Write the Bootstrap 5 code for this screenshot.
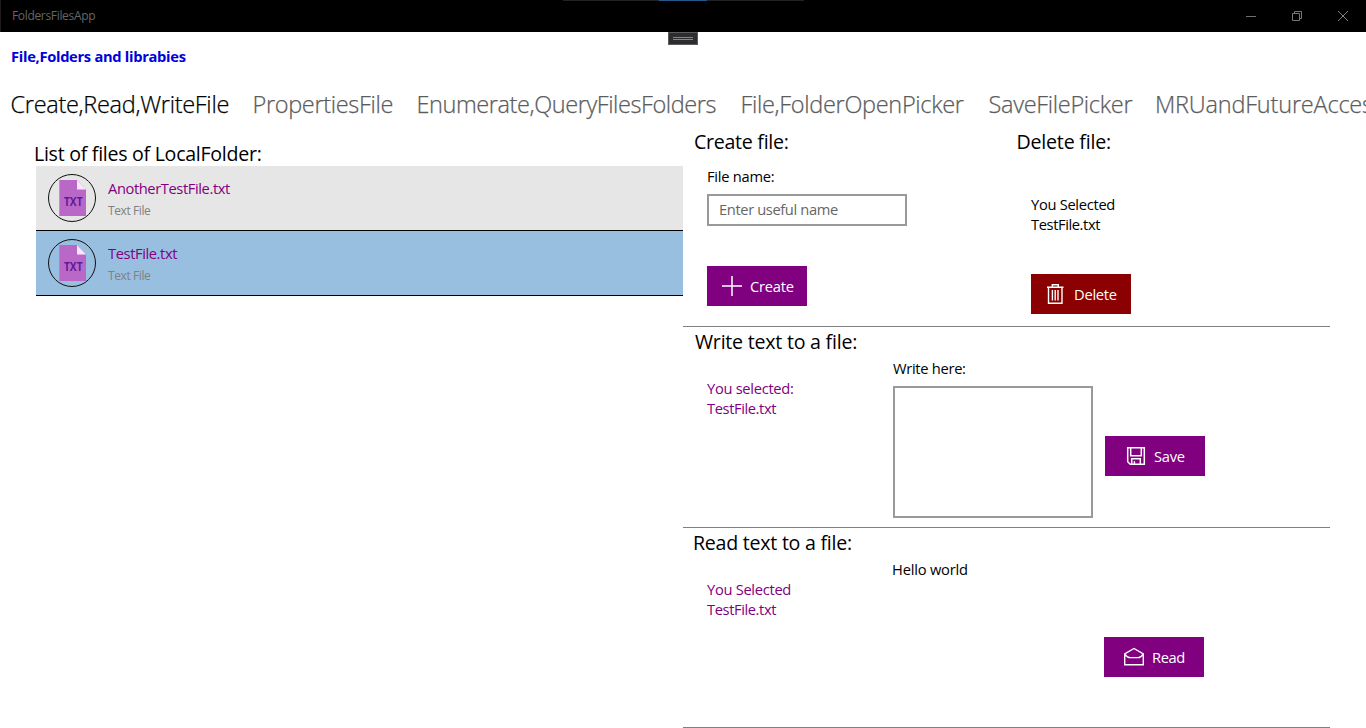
<!DOCTYPE html>
<html lang="en">
<head>
<meta charset="utf-8">
<meta name="viewport" content="width=device-width, initial-scale=1">
<title>FoldersFilesApp</title>
<link href="https://cdn.jsdelivr.net/npm/bootstrap@5.3.0/dist/css/bootstrap.min.css" rel="stylesheet">
<style>
body{font-family:"Open Sans",sans-serif;font-size:14.7px;line-height:20px;letter-spacing:-.3px;color:#000;background:#fff;height:728px;overflow:hidden}
.titlebar{height:32px;background:#000;color:#666;font-size:12px;letter-spacing:-.33px;border-left:1px solid #1c1c1c;padding-left:11px}
.dock-line{top:0;left:563px;width:241px;height:1px;background:linear-gradient(90deg,#222 96px,#24598c 96px,#24598c 144px,#222 144px)}
.handle{left:668px;top:32px;width:30px;height:13px;background:#2d2d30;border:1px solid #5c5c5f;padding:4px 4px 0}
.handle i{display:block;height:3px;border-top:1px solid #85858a;border-bottom:1px solid #85858a}
.win svg{width:10px;height:10px;margin-right:36px;display:block}
.win svg:last-child{margin-right:18px}
.app-title{height:56px;padding:14px 0 0 11px;font-size:14.7px;line-height:20px;font-weight:700;letter-spacing:-.3px;color:#0000dc}
.pivot{height:38px;flex-wrap:nowrap;padding-left:10.5px;overflow:hidden}
.pivot .nav-link{flex:none;padding:0;font-size:23.5px;line-height:32px;font-weight:300;color:#5c5c5c;white-space:nowrap;-webkit-text-stroke:.25px currentColor}
.pivot .nav-link.active{color:#000}
.pane-l{width:647px;margin-left:36px;padding-top:14px}
.pane-r{width:647px}
.head{font-size:19.6px;line-height:28px;font-weight:400;margin:0;letter-spacing:-.28px}
.files .list-group-item{height:65px;padding:8px 12px;border:0;border-bottom:1px solid #000;background:#e6e6e6;border-radius:0}
.files .list-group-item.sel{background:#99bfe0}
.fname{color:#800080;letter-spacing:-.4px;padding-top:4px}
.ftype{color:#808080;font-size:12px;line-height:16px;letter-spacing:-.4px;margin-top:5px}
.sect{height:201px;border-bottom:1px solid #808080}
.purple{color:#800080}
.tight{letter-spacing:-.4px}
.act{width:100px;height:40px;border:0;border-radius:0;padding:0;color:#fff;background:#800080;font-size:14.7px;line-height:20px;letter-spacing:-.25px}
.act:hover{background:#800080;color:#fff}
.act svg{width:20px;height:20px;flex:none;fill:none;stroke:#fff}
.act.danger,.act.danger:hover{background:#8b0000}
.box,.box:focus{border:2px solid #999;border-radius:0;width:200px;box-shadow:none;resize:none;display:block}
input.box{height:32px;padding:0 10px 2px;font-size:14.7px;line-height:20px;letter-spacing:-.38px}
input.box::placeholder{color:#666}
textarea.box{height:132px;padding:4px 10px}
</style>
</head>
<body>
<header class="titlebar d-flex align-items-center position-relative">
  <span>FoldersFilesApp</span>
  <div class="win d-flex ms-auto">
    <svg viewBox="0 0 10 10" stroke="#707070"><path d="M0 5.5h10"/></svg>
    <svg viewBox="0 0 10 10" stroke="#777" fill="none"><path d="M.5 2.5h7v7h-7zM2.5 2.5v-2h7v7h-2"/></svg>
    <svg viewBox="0 0 10 10" stroke="#808080"><path d="M0 0l10 10M10 0L0 10"/></svg>
  </div>
</header>
<div class="dock-line position-absolute"></div>
<div class="handle position-absolute"><i></i></div>

<h1 class="app-title m-0">File,Folders and librabies</h1>

<nav class="pivot nav">
  <a class="nav-link active" style="width:242px;letter-spacing:-.3px">Create,Read,WriteFile</a>
  <a class="nav-link" style="width:164px;letter-spacing:-.33px">PropertiesFile</a>
  <a class="nav-link" style="width:324px;letter-spacing:-.41px">Enumerate,QueryFilesFolders</a>
  <a class="nav-link" style="width:248px;letter-spacing:-.31px">File,FolderOpenPicker</a>
  <a class="nav-link" style="width:166.5px;letter-spacing:-.3px">SaveFilePicker</a>
  <a class="nav-link" style="letter-spacing:-.2px">MRUandFutureAccess</a>
</nav>

<main class="d-flex">
  <section class="pane-l">
    <h2 class="head" style="margin-left:-2px;height:26px">List of files of LocalFolder:</h2>
    <div class="list-group files">
      <div class="list-group-item d-flex">
        <svg width="48" height="48" viewBox="0 0 48 48" class="flex-shrink-0">
          <circle cx="24" cy="24" r="23.5" fill="none" stroke="#111"/>
          <path d="M11.3 6H29l9 9.5V42H11.3z" fill="#ba68c8"/><path d="M29 6l9 9.5h-9z" fill="#fbe6ff"/>
          <text x="16" y="31.6" font-family="Open Sans" font-size="12" font-weight="700" fill="#5c1a9c" textLength="18.5" lengthAdjust="spacingAndGlyphs" letter-spacing="0">TXT</text>
        </svg>
        <div class="ms-2 ps-1"><div class="fname">AnotherTestFile.txt</div><div class="ftype">Text File</div></div>
      </div>
      <div class="list-group-item sel d-flex">
        <svg width="48" height="48" viewBox="0 0 48 48" class="flex-shrink-0">
          <circle cx="24" cy="24" r="23.5" fill="none" stroke="#111"/>
          <path d="M11.3 6H29l9 9.5V42H11.3z" fill="#ba68c8"/><path d="M29 6l9 9.5h-9z" fill="#fbe6ff"/>
          <text x="16" y="31.6" font-family="Open Sans" font-size="12" font-weight="700" fill="#5c1a9c" textLength="18.5" lengthAdjust="spacingAndGlyphs" letter-spacing="0">TXT</text>
        </svg>
        <div class="ms-2 ps-1"><div class="fname">TestFile.txt</div><div class="ftype">Text File</div></div>
      </div>
    </div>
  </section>

  <section class="pane-r">
    <div class="sect d-flex">
      <div class="w-50" style="padding:2px 0 0 24px">
        <h2 class="head" style="margin-left:-13px">Create file:</h2>
        <label for="fn" class="d-block" style="margin-top:10px;letter-spacing:-.25px">File name:</label>
        <input id="fn" class="box" placeholder="Enter useful name" style="margin-top:8px">
        <button class="btn act d-flex align-items-center" style="margin-top:40px;padding-left:15px">
          <svg viewBox="0 0 20 20" stroke-width="1.5"><path d="M10 0v20M0 10h20"/></svg><span style="margin-left:8px">Create</span>
        </button>
      </div>
      <div class="w-50" style="padding:2px 0 0 24.5px">
        <h2 class="head" style="margin-left:-14.5px;letter-spacing:-.2px">Delete file:</h2>
        <div style="margin-top:38px">You Selected<br><span class="tight">TestFile.txt</span></div>
        <button class="btn act danger d-flex align-items-center" style="margin-top:40px;padding-left:14px">
          <svg viewBox="0 0 20 20" stroke-width="1.4"><path d="M2 3.2h16.5M7.3 3V.8h6V3M3.5 3.5v15.8h13.5V3.5M7.4 6v10.5M10.2 6v10.5M13 6v10.5"/></svg><span style="margin-left:9px">Delete</span>
        </button>
      </div>
    </div>

    <div class="sect">
      <h2 class="head" style="margin-left:12px;height:31px;padding-top:1px;letter-spacing:-.23px">Write text to a file:</h2>
      <div class="d-flex">
        <div class="purple" style="width:210px;padding:20px 0 0 24px">You selected:<br><span class="tight">TestFile.txt</span></div>
        <div><label for="wt" class="d-block">Write here:</label><textarea id="wt" class="box" style="margin-top:8px"></textarea></div>
        <button class="btn act d-flex align-items-center" style="margin:78px 0 0 12px;padding-left:21px">
          <svg viewBox="0 0 20 20" stroke-width="1.5"><path d="M1.7 1.7h16.6v16.6H4.2l-2.5-2.5zM4.7 1.7v8h10.6v-8M5.7 18.3v-5.6h8.6v5.6M8.4 18.3v-3"/></svg><span style="margin-left:8px">Save</span>
        </button>
      </div>
    </div>

    <div class="sect" style="height:200px">
      <h2 class="head" style="margin-left:10px;height:31px;padding-top:1px;letter-spacing:-.25px">Read text to a file:</h2>
      <div class="d-flex">
        <div class="purple" style="width:209px;padding:20px 0 0 24px">You Selected<br><span class="tight">TestFile.txt</span></div>
        <div style="width:212px;letter-spacing:-.2px">Hello world</div>
        <button class="btn act d-flex align-items-center" style="margin-top:78px;padding-left:20px">
          <svg viewBox="0 0 20 20" stroke-width="1.4"><path d="M.7 6.8L10 1.5l9.3 5.3v11H.7zM.7 6.8Q3 10.6 6 10.6h8q3 0 5.3-3.8"/></svg><span style="margin-left:8px;letter-spacing:-.4px">Read</span>
        </button>
      </div>
    </div>
  </section>
</main>
<script src="https://cdn.jsdelivr.net/npm/bootstrap@5.3.0/dist/js/bootstrap.bundle.min.js"></script>
</body>
</html>
